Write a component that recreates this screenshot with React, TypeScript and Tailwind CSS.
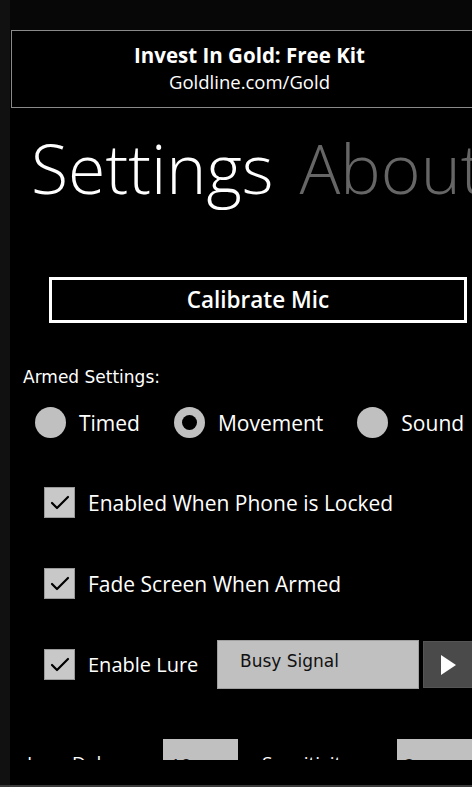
import { Check } from 'lucide-react';

const radios = [
  { label: 'Timed', checked: false, gap: 'mr-[34px]' },
  { label: 'Movement', checked: true, gap: 'mr-[34px]' },
  { label: 'Sound', checked: false, gap: '' },
];

const checks = ['Enabled When Phone is Locked', 'Fade Screen When Armed'];

const font = { fontFamily: '"Open Sans", "Noto Sans", sans-serif' };
const comic = { fontFamily: '"DejaVu Sans", "Noto Sans", sans-serif' };

function CheckBox() {
  return (
    <div className="w-[31px] h-[31px] bg-[#c8c8c8] border border-[#9a9a9a] flex items-center justify-center shrink-0">
      <Check className="w-6 h-6 text-black" strokeWidth={2.2} />
    </div>
  );
}

export default function App() {
  return (
    <div className="relative w-[472px] h-[787px] bg-black flex overflow-hidden text-white" style={font}>
      {/* left gutter */}
      <div className="w-[10px] h-full bg-[#111] shrink-0" />

      <div className="flex-1 flex flex-col min-w-0">
        <div className="h-[30px] bg-[#070707] shrink-0" />

        {/* ad banner */}
        <div className="ml-[1px] -mr-2 h-[78px] border border-[#8a8a8a] flex flex-col items-center justify-center shrink-0">
          <div className="text-[20.5px] font-bold leading-[26px] pl-2">Invest In Gold: Free Kit</div>
          <div className="text-[18.5px] leading-[28px] pl-2">Goldline.com/Gold</div>
        </div>

        {/* pivot header */}
        <div className="flex items-baseline gap-[26px] pl-[21px] h-[108px] pt-[10px] whitespace-nowrap shrink-0">
          <span className="text-[68px] font-light leading-[100px]">Settings</span>
          <span className="text-[68px] font-light leading-[100px] text-[#666]">About</span>
        </div>

        {/* scroll area, clipped at the bottom */}
        <div className="h-[544px] overflow-hidden flex flex-col shrink-0">
          <div className="pt-[61px] pl-[39px] pr-[5px]">
            <div className="h-[46px] border-[3px] border-white flex items-center justify-center text-[22.5px] font-semibold">
              Calibrate Mic
            </div>
          </div>

          <div className="mt-[42px] pl-[13px] text-[17px] leading-[24px]" style={comic}>Armed Settings:</div>

          <div className="mt-[18px] pl-[25px] flex items-center whitespace-nowrap">
            {radios.map(r => (
              <div key={r.label} className={'flex items-center gap-[13px] ' + r.gap}>
                <div className="w-[31px] h-[31px] rounded-full bg-[#c0c0c0] flex items-center justify-center shrink-0">
                  {r.checked && <div className="w-[15px] h-[15px] rounded-full bg-black" />}
                </div>
                <span className="text-[21px] leading-[30px]">{r.label}</span>
              </div>
            ))}
          </div>

          {checks.map((c, i) => (
            <div key={c} className={i === 0 ? 'mt-[49px] pl-[34px] flex items-center gap-[13px]' : 'mt-[50px] pl-[34px] flex items-center gap-[13px]'}>
              <CheckBox />
              <span className="text-[21px] leading-[30px] whitespace-nowrap">{c}</span>
            </div>
          ))}

          <div className="mt-[41px] pl-[34px] flex items-center">
            <CheckBox />
            <span className="ml-[13px] w-[129px] text-[20px] leading-[30px] whitespace-nowrap shrink-0">Enable Lure</span>
            <div className="w-[202px] h-[49px] bg-[#c0c0c0] border border-[#a0a0a0] flex items-center pl-[22px] pb-[5px] text-[17px] text-[#111] shrink-0" style={comic}>
              Busy Signal
            </div>
            <div className="ml-[4px] w-[60px] h-[47px] bg-[#4a4a4a] border border-[#555] flex items-center pl-[17px] shrink-0">
              <svg width="15" height="20" viewBox="0 0 15 20"><polygon points="0,0 15,10 0,20" fill="#fff" /></svg>
            </div>
          </div>

          <div className="mt-[50px] pl-[17px] flex items-start whitespace-nowrap shrink-0">
            <span className="mt-[10px] text-[19px] leading-[28px] w-[136px] shrink-0">Lure Delay</span>
            <div className="w-[75px] h-[40px] bg-[#c0c0c0] text-[#111] text-[19px] pl-[7px] pt-[12px] leading-[28px] shrink-0">10</div>
            <span className="ml-[24px] mt-[10px] text-[19px] leading-[28px] w-[135px] shrink-0">Sensitivity</span>
            <div className="w-[80px] h-[40px] bg-[#c0c0c0] text-[#111] text-[19px] pl-[7px] pt-[12px] leading-[28px] shrink-0">2</div>
          </div>
        </div>

        <div className="flex-1" />
        <div className="-ml-[10px] h-[2px] bg-[#3a3a3a] shrink-0" />
      </div>
    </div>
  );
}
